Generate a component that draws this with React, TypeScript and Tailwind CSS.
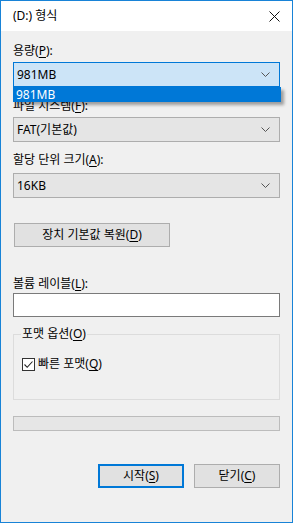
import React from "react";

const U = ({ c }: { c: string }) => <span className="underline underline-offset-2">{c}</span>;

const Chevron = () => (
  <svg width="9" height="5" viewBox="0 0 9 5" className="shrink-0">
    <path d="M0.5 0.5 L4.5 4.5 L8.5 0.5" fill="none" stroke="#555" strokeWidth="1" />
  </svg>
);

const Combo = ({ text, active }: { text: string; active?: boolean }) => (
  <div
    className={
      "h-[25px] flex items-center justify-between pl-[3px] pr-[9px] border " +
      (active ? "bg-[#cce4f7] border-[#0078d7]" : "bg-[#e5e5e5] border-[#adadad]")
    }
  >
    <span className="text-[#000]">{text}</span>
    <Chevron />
  </div>
);

export default function App() {
  return (
    <div
      className="w-[293px] h-[523px] border border-[#1883d7] flex flex-col bg-[#f0f0f0] text-[12px] leading-[16px] text-black overflow-hidden"
      style={{ fontFamily: '"Noto Sans", "Noto Sans CJK KR", sans-serif' }}
    >
      <div className="h-[30px] bg-white flex items-center justify-between pl-[12px] pr-[12px] shrink-0">
        <span className="text-[12px]">(D:) 형식</span>
        <svg width="11" height="11" viewBox="0 0 11 11">
          <path d="M0.5 0.5 L10.5 10.5 M10.5 0.5 L0.5 10.5" stroke="#111" strokeWidth="1" />
        </svg>
      </div>
      <div className="flex flex-col px-[12px] relative">
        <div className="mt-[12px] h-[16px]">
          용량(<U c="P" />):
        </div>
        <div className="mt-[3px] relative">
          <Combo text="981MB" active />
          <div className="absolute left-0 top-[25px] w-[268px] h-[15px] bg-[#0078d7] text-white pl-[3px] leading-[15px] shadow-[3px_3px_3px_rgba(0,0,0,0.35)] z-10">
            981MB
          </div>
        </div>
        <div className="mt-[11px] h-[16px]">
          파일 시스템(<U c="F" />):
        </div>
        <div className="mt-[3px]">
          <Combo text="FAT(기본값)" />
        </div>
        <div className="mt-[10px] h-[16px]">
          할당 단위 크기(<U c="A" />):
        </div>
        <div className="mt-[5px]">
          <Combo text="16KB" />
        </div>
        <div className="mt-[25px] ml-[1px] w-[156px] h-[24px] bg-[#e1e1e1] border border-[#adadad] flex items-center justify-center">
          장치 기본값 복원(<U c="D" />)
        </div>
        <div className="mt-[29px] h-[16px]">
          볼륨 레이블(<U c="L" />):
        </div>
        <div className="mt-[1px] h-[24px] bg-white border border-[#7a7a7a]" />
        <div className="mt-[17px] relative h-[66px] border border-[#dcdcdc]">
          <div className="absolute left-[7px] top-[-9px] px-[1px] bg-[#f0f0f0] h-[16px]">
            포맷 옵션(<U c="O" />)
          </div>
          <div className="absolute left-[8px] top-[21px] flex items-center">
            <div className="w-[13px] h-[13px] bg-white border border-[#333] flex items-center justify-center">
              <svg width="11" height="11" viewBox="0 0 11 11">
                <path d="M1.5 5.5 L4.2 8.3 L9.5 2.5" fill="none" stroke="#222" strokeWidth="1.1" />
              </svg>
            </div>
            <span className="ml-[3px]">
              빠른 포맷(<U c="Q" />)
            </span>
          </div>
        </div>
        <div className="mt-[16px] h-[15px] bg-[#e6e6e6] border border-[#bcbcbc]" />
        <div className="mt-[33px] flex justify-end gap-[10px]">
          <div className="w-[86px] h-[24px] bg-[#e1e1e1] border-2 border-[#0078d7] flex items-center justify-center">
            시작(<U c="S" />)
          </div>
          <div className="w-[86px] h-[24px] bg-[#e1e1e1] border border-[#adadad] flex items-center justify-center">
            닫기(<U c="C" />)
          </div>
        </div>
      </div>
    </div>
  );
}
